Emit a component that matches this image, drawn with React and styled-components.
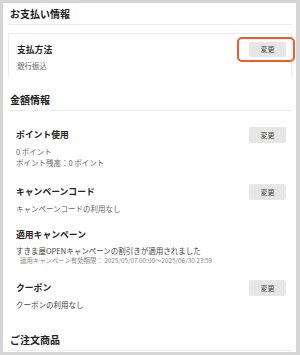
import React from "react";
import styled, { createGlobalStyle } from "styled-components";

const GlobalStyle = createGlobalStyle`
  html, body {
    margin: 0;
    padding: 0;
    height: 355px;
    overflow: hidden;
    background: #d5d5d5;
  }
  body {
    font-family: "Noto Sans CJK JP", "Noto Sans", sans-serif;
    color: #333;
  }
`;

const Frame = styled.div`
  height: 355px;
  box-sizing: border-box;
  padding: 3px 4px 0 3px;
  background: #d5d5d5;
  overflow: hidden;
`;

const Panel = styled.div`
  background: #fff;
  height: 349px;
  padding: 0 4px 0 5px;
  overflow: hidden;
`;

const Heading = styled.h2`
  margin: 0;
  padding: 1px 0 0 2px;
  font-size: 10px;
  line-height: 20px;
  font-weight: 700;
  color: #222;
  border-bottom: 1px solid #ececec;
`;

const Card = styled.div`
  margin: 8px 0 12px;
  border: 1px solid #ececec;
  border-bottom: none;
  padding: 8px 5px 6px 8px;
`;

const Row = styled.div`
  display: flex;
  align-items: center;
  justify-content: space-between;
  height: ${(p) => p.$h || 16}px;
`;

const Title = styled.div`
  font-size: 8.8px;
  font-weight: 700;
  line-height: 14px;
  color: #222;
`;

const Sub = styled.div`
  font-size: 7.5px;
  line-height: 11px;
  color: ${(p) => (p.$dark ? "#444" : "#666")};
  margin-top: ${(p) => p.$mt ?? 0}px;
  white-space: nowrap;
`;

const Note = styled.div`
  font-size: 6.4px;
  line-height: 10px;
  color: #888;
  padding-left: 4px;
  white-space: nowrap;
`;

const ButtonWrap = styled.div`
  position: relative;
  display: flex;
`;

const Highlight = styled.span`
  position: absolute;
  left: -12px;
  right: -9px;
  top: -5px;
  bottom: -5px;
  border: 2.5px solid #f15a2b;
  border-radius: 5px;
  pointer-events: none;
`;

const Button = styled.button`
  width: 37px;
  height: ${(p) => p.$h || 16}px;
  padding: 0;
  border: none;
  border-radius: 2px;
  background: #e6e6e6;
  color: #444;
  font-family: inherit;
  font-size: 7px;
  line-height: 1;
`;

const List = styled.div`
  display: flex;
  flex-direction: column;
  padding: 16px 6px 19px 8px;
`;

const Item = styled.div`
  margin-top: ${(p) => p.$mt ?? 14}px;
`;

function Change({ highlighted, h }) {
  return (
    <ButtonWrap>
      <Button $h={h}>変更</Button>
      {highlighted && <Highlight />}
    </ButtonWrap>
  );
}

export default function App() {
  return (
    <>
      <GlobalStyle />
      <Frame>
        <Panel>
          <Heading>お支払い情報</Heading>
          <Card>
            <Row $h={15}>
              <Title>支払方法</Title>
              <Change highlighted h={15} />
            </Row>
            <Sub $mt={3}>銀行振込</Sub>
          </Card>

          <Heading>金額情報</Heading>
          <List>
            <Item $mt={0}>
              <Row>
                <Title>ポイント使用</Title>
                <Change />
              </Row>
              <Sub $mt={3}>0 ポイント</Sub>
              <Sub>ポイント残高：0 ポイント</Sub>
            </Item>
            <Item $mt={16}>
              <Row>
                <Title>キャンペーンコード</Title>
                <Change />
              </Row>
              <Sub $mt={3}>キャンペーンコードの利用なし</Sub>
            </Item>
            <Item $mt={13}>
              <Row>
                <Title>適用キャンペーン</Title>
              </Row>
              <Sub $dark $mt={2}>すきま屋OPENキャンペーンの割引きが適用されました</Sub>
              <Note>適用キャンペーン有効期限： 2025/05/07 00:00〜2025/06/30 23:59</Note>
            </Item>
            <Item $mt={14}>
              <Row>
                <Title>クーポン</Title>
                <Change />
              </Row>
              <Sub $dark $mt={3}>クーポンの利用なし</Sub>
            </Item>
          </List>

          <Heading>ご注文商品</Heading>
        </Panel>
      </Frame>
    </>
  );
}
